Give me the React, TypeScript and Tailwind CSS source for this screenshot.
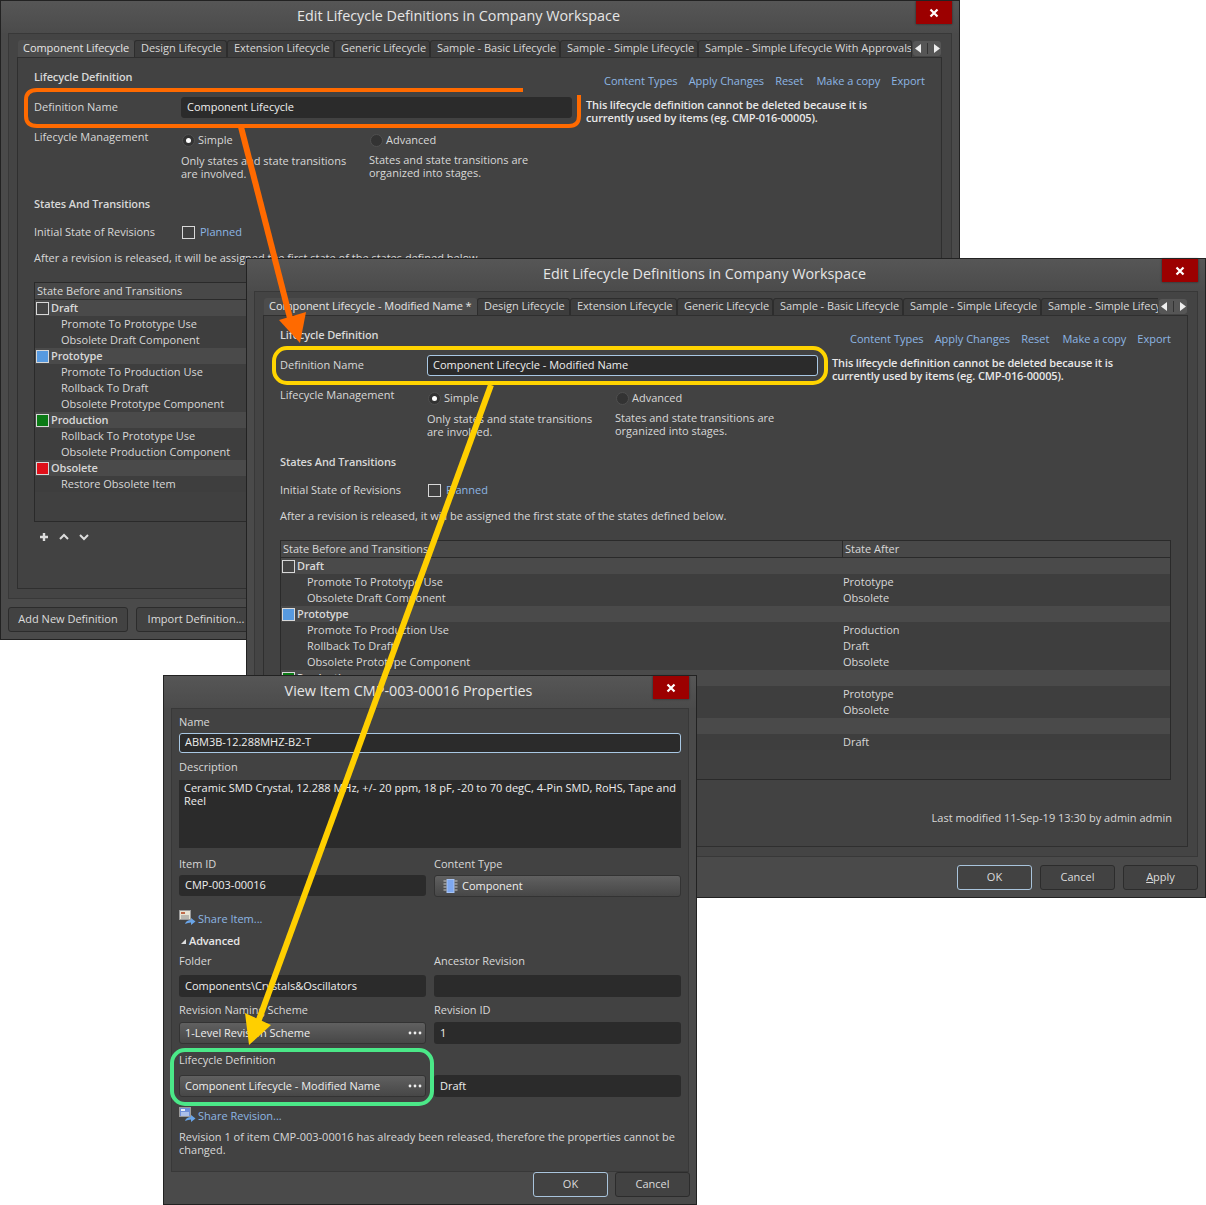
import React from "react";

const Swatch = ({ color }: { color: string }) => (
  <span className={`w-[13px] h-[13px] border border-[#d8d8d8] shrink-0 ${color}`} />
);

const Close = () => (
  <div className="w-[36px] h-[23px] mr-[7px] bg-[#9c0000] flex items-center justify-center shrink-0 shadow-[0_0_2px_#222]">
    <svg width="10" height="10" viewBox="0 0 10 10">
      <path d="M1.5 1.5 L8.5 8.5 M8.5 1.5 L1.5 8.5" stroke="#fff" strokeWidth="2.2" />
    </svg>
  </div>
);

const TitleBar = ({ title }: { title: string }) => (
  <div className="h-8 flex items-start shrink-0 bg-gradient-to-b from-[#565656] to-[#4b4b4b]">
    <div className="flex-1 h-[30px] flex items-center justify-center text-[14.35px] text-[#e6e6e6]">{title}</div>
    <Close />
  </div>
);

const Btn = ({ label, primary, w }: { label: React.ReactNode; primary?: boolean; w: string }) => (
  <div
    className={`h-[25px] ${w} rounded-[3px] bg-[#424242] border flex items-center justify-center pb-px text-[#dcdcdc] ${
      primary ? "border-[#a9c4dc]" : "border-[#2c2c2c]"
    }`}
  >
    {label}
  </div>
);

const Radio = ({ on, label }: { on?: boolean; label: string }) => (
  <div className="flex items-center h-[14px] mt-[3px]">
    <span className="w-[13px] h-[13px] rounded-full bg-[#333333] border border-[#4f4f4f] flex items-center justify-center">
      {on && <span className="w-[5px] h-[5px] rounded-full bg-white" />}
    </span>
    <span className="ml-[3px]">{label}</span>
  </div>
);

type Row = { name: string; after?: string; color?: string };
const rows: Row[] = [
  { name: "Draft", color: "bg-[#444444]" },
  { name: "Promote To Prototype Use", after: "Prototype" },
  { name: "Obsolete Draft Component", after: "Obsolete" },
  { name: "Prototype", color: "bg-[#579ae0]" },
  { name: "Promote To Production Use", after: "Production" },
  { name: "Rollback To Draft", after: "Draft" },
  { name: "Obsolete Prototype Component", after: "Obsolete" },
  { name: "Production", color: "bg-[#0b7a16]" },
  { name: "Rollback To Prototype Use", after: "Prototype" },
  { name: "Obsolete Production Component", after: "Obsolete" },
  { name: "Obsolete", color: "bg-[#e0101a]" },
  { name: "Restore Obsolete Item", after: "Draft" },
];

const StateTable = () => (
  <div className="mt-[17px] w-[891px] h-[240px] border border-[#2a2a2a] bg-[#404040] flex flex-col">
    <div className="h-[17px] shrink-0 flex items-center bg-[#484848] border-b border-[#2a2a2a]">
      <div className="w-[561px] pl-[2px]">State Before and Transitions</div>
      <div className="border-l border-[#2a2a2a] pl-[2px] h-[16px] leading-[16px]">State After</div>
    </div>
    {rows.map((r) => (
      <div
        key={r.name}
        className={`h-4 shrink-0 flex items-center ${r.color ? "bg-[#4a4a4a]" : "bg-[#3e3e3e]"}`}
      >
        <div className={`w-[562px] flex items-center ${r.color ? "pl-[1px]" : "pl-[26px]"}`}>
          {r.color && <Swatch color={r.color} />}
          <span className={r.color ? "font-semibold tracking-[-0.13px] ml-[2px]" : ""}>{r.name}</span>
        </div>
        <div>{r.after}</div>
      </div>
    ))}
  </div>
);

const TreeTools = () => (
  <div className="h-[14px] mt-[8px] flex items-center pl-[4px] gap-[8px]">
    <svg width="12" height="12" viewBox="0 0 12 12">
      <path d="M6 2 V10 M2 6 H10" stroke="#dddddd" strokeWidth="2.4" />
    </svg>
    <svg width="12" height="12" viewBox="0 0 12 12">
      <path d="M2 8 L6 4 L10 8" stroke="#dddddd" strokeWidth="2" fill="none" />
    </svg>
    <svg width="12" height="12" viewBox="0 0 12 12">
      <path d="M2 4 L6 8 L10 4" stroke="#dddddd" strokeWidth="2" fill="none" />
    </svg>
  </div>
);

const tabWidths = ["w-[93px]", "w-[107px]", "w-[96px]", "w-[130px]", "w-[138px]", "w-[214px]"];
const tabNames = [
  "Design Lifecycle",
  "Extension Lifecycle",
  "Generic Lifecycle",
  "Sample - Basic Lifecycle",
  "Sample - Simple Lifecycle",
  "Sample - Simple Lifecycle With Approvals",
];

const LifecycleWindow = ({
  pos,
  firstTab,
  firstTabW,
  value,
  focused,
}: {
  pos: string;
  firstTab: string;
  firstTabW: string;
  value: string;
  focused?: boolean;
}) => (
  <div className={`absolute ${pos} w-[960px] h-[640px] bg-[#4a4a4a] border border-[#222222] flex flex-col`}>
    <TitleBar title="Edit Lifecycle Definitions in Company Workspace" />
    <div className="ml-[7px] w-[944px] h-[566px] border border-[#383838] bg-[#444444] pt-[6px] pl-2 shrink-0">
      <div className="flex h-[17px] w-[925px] items-stretch">
        <div className="flex w-[895px] overflow-hidden tracking-[-0.04px]">
          <div className={`${firstTabW} shrink-0 bg-[#4c4c4c] rounded-t-[3px] pl-[5px] leading-[15px] whitespace-nowrap ml-[1px] text-[#e6e6e6]`}>
            {firstTab}
          </div>
          {tabNames.map((t, i) => (
            <div
              key={t}
              className={`${tabWidths[i]} shrink-0 bg-[#3d3d3d] border-t border-x border-[#2d2d2d] rounded-t-[3px] pl-[6px] leading-[13px] whitespace-nowrap overflow-hidden`}
            >
              {t}
            </div>
          ))}
        </div>
        <div className="ml-[1px] w-[28px] h-[15px] mt-[1px] rounded-[3px] bg-[#565656] flex items-center justify-center gap-[5px]">
          <svg width="7" height="9" viewBox="0 0 7 9"><path d="M6 0 V9 L0 4.5 Z" fill="#eeeeee" /></svg>
          <span className="w-px h-[11px] bg-[#333333]" />
          <svg width="7" height="9" viewBox="0 0 7 9"><path d="M1 0 V9 L7 4.5 Z" fill="#eeeeee" /></svg>
        </div>
      </div>
      <div className="w-[925px] h-[532px] border border-[#2f2f2f] bg-[#424242] pl-4">
        <div className="flex justify-between h-[32px] pr-4">
          <div className="mt-[12px] font-semibold tracking-[-0.13px]">Lifecycle Definition</div>
          <div className="mt-[16px] flex text-[#8db6e4] gap-[11px]">
            <span>Content Types</span>
            <span>Apply Changes</span>
            <span className="mr-[2px]">Reset</span>
            <span>Make a copy</span>
            <span>Export</span>
          </div>
        </div>
        <div className="flex h-[21px] mt-[7px] items-center">
          <div className="w-[147px] pb-[2px]">Definition Name</div>
          <div
            className={`w-[391px] h-[21px] rounded-[3px] bg-[#2b2b2b] pl-[5px] pb-[2px] flex items-center text-[#eeeeee] border ${
              focused ? "border-[#a9c8e4]" : "border-[#2b2b2b]"
            }`}
          >
            {value}
          </div>
          <div className="ml-[14px] w-[300px] font-semibold tracking-[-0.13px] leading-[13px] h-[21px] pt-[1px] text-[#e8e8e8]">
            This lifecycle definition cannot be deleted because it is currently used by items (eg. CMP-016-00005).
          </div>
        </div>
        <div className="flex mt-3">
          <div className="w-[147px]">Lifecycle Management</div>
          <div className="w-[188px]">
            <div className="pl-px"><Radio on label="Simple" /></div>
            <div className="mt-[7px] leading-[13px] w-[172px]">Only states and state transitions are involved.</div>
          </div>
          <div>
            <div className="pl-px"><Radio label="Advanced" /></div>
            <div className="mt-[6px] leading-[13px] w-[172px]">States and state transitions are organized into stages.</div>
          </div>
        </div>
        <div className="mt-[17px] font-semibold tracking-[-0.13px]">States And Transitions</div>
        <div className="flex items-center mt-[14px]">
          <div className="w-[148px]">Initial State of Revisions</div>
          <span className="w-[13px] h-[13px] border border-[#d8d8d8] bg-[#404040]" />
          <span className="ml-[5px] text-[#8db6e4]">Planned</span>
        </div>
        <div className="mt-3">After a revision is released, it will be assigned the first state of the states defined below.</div>
        <StateTable />
        <TreeTools />
        <div className="mt-[9px] pr-[15px] text-right">Last modified 11-Sep-19 13:30 by admin admin</div>
      </div>
    </div>
    <div className="flex justify-between mt-2 pl-[7px] pr-[7px]">
      <div className="flex gap-2">
        <Btn w="w-[120px]" label="Add New Definition" />
        <Btn w="w-[120px]" label="Import Definition..." />
      </div>
      <div className="flex gap-2">
        <Btn w="w-[75px]" primary label="OK" />
        <Btn w="w-[75px]" label="Cancel" />
        <Btn w="w-[75px]" label={<span><u>A</u>pply</span>} />
      </div>
    </div>
  </div>
);

const Field = ({ h, children }: { h: string; children?: React.ReactNode }) => (
  <div className={`${h} rounded-[3px] bg-[#2b2b2b] pl-[6px] pb-px flex items-center text-[#eeeeee]`}>{children}</div>
);

const Dropdown = ({ children, dots }: { children: React.ReactNode; dots?: boolean }) => (
  <div className="h-[22px] rounded-[3px] bg-gradient-to-b from-[#606060] to-[#474747] border border-[#333333] pl-[5px] pr-[2px] flex items-center justify-between text-[#eeeeee]">
    <div className="flex items-center">{children}</div>
    {dots && (
      <svg width="16" height="4" viewBox="0 0 16 4">
        <circle cx="3" cy="2" r="1.4" fill="#eeeeee" />
        <circle cx="8" cy="2" r="1.4" fill="#eeeeee" />
        <circle cx="13" cy="2" r="1.4" fill="#eeeeee" />
      </svg>
    )}
  </div>
);

const ShareIcon = ({ blue }: { blue?: boolean }) => (
  <svg width="17" height="16" viewBox="0 0 17 16" className="shrink-0">
    <rect x="0.5" y="0.5" width="11" height="9" fill={blue ? "#6f8fd8" : "#e8e4d4"} stroke="#9a9a9a" />
    <rect x="2" y="2" width="4" height="2" fill={blue ? "#e8eef8" : "#c06a4a"} />
    <path d="M2 6 H10 M2 8 H10" stroke={blue ? "#e8eef8" : "#8a8a8a"} />
    <path d="M6 14 C7 11 9 10 12 10 V8 L16.5 11.5 L12 15 V12.5 C10 12.5 8 13 6 14 Z" fill="#6aa5e8" />
  </svg>
);

const ComponentIcon = () => (
  <svg width="15" height="14" viewBox="0 0 15 14" className="shrink-0">
    <rect x="4" y="0.5" width="7" height="13" fill="#7ea8f0" stroke="#a8c4f4" />
    <path d="M0.5 2 H3.5 M0.5 5 H3.5 M0.5 8 H3.5 M0.5 11 H3.5 M11.5 2 H14.5 M11.5 5 H14.5 M11.5 8 H14.5 M11.5 11 H14.5" stroke="#c8c8c8" />
  </svg>
);

const ItemWindow = () => (
  <div className="absolute left-[163px] top-[675px] w-[534px] h-[530px] bg-[#4a4a4a] border border-[#222222] flex flex-col">
    <TitleBar title="View Item CMP-003-00016 Properties" />
    <div className="ml-[7px] w-[518px] h-[464px] shrink-0 border border-[#383838] bg-[#424242] pl-[7px] pt-[6px]">
      <div className="w-[502px]">
        <div>Name</div>
        <div className="mt-[4px] h-[20px] rounded-[3px] bg-[#2b2b2b] border border-[#a9c8e4] pl-[5px] pb-[2px] flex items-center text-[#eeeeee]">ABM3B-12.288MHZ-B2-T</div>
        <div className="mt-[7px]">Description</div>
        <div className="mt-[6px] h-[68px] bg-[#2b2b2b] px-[5px] pt-[1px] leading-[13px] text-[#eeeeee]">
          Ceramic SMD Crystal, 12.288 MHz, +/- 20 ppm, 18 pF, -20 to 70 degC, 4-Pin SMD, RoHS, Tape and Reel
        </div>
        <div className="mt-[9px] grid grid-cols-[247px_247px] gap-x-2">
          <div>Item ID</div>
          <div>Content Type</div>
          <div className="mt-[4px]"><Field h="h-[21px]">CMP-003-00016</Field></div>
          <div className="mt-[4px]">
            <Dropdown>
              <span className="ml-[3px]"><ComponentIcon /></span>
              <span className="ml-[4px]">Component</span>
            </Dropdown>
          </div>
        </div>
        <div className="mt-[13px] h-4 flex items-end text-[#8db6e4]">
          <ShareIcon />
          <span className="ml-[2px] leading-[14px]">Share Item...</span>
        </div>
        <div className="mt-[8px] flex items-center font-semibold tracking-[-0.13px] text-[#e6e6e6]">
          <svg width="7" height="7" viewBox="0 0 7 7" className="ml-px"><path d="M6 1 V6 H1 Z" fill="#dddddd" /></svg>
          <span className="ml-[2px]">Advanced</span>
        </div>
        <div className="mt-[6px] grid grid-cols-[247px_247px] gap-x-2">
          <div>Folder</div>
          <div>Ancestor Revision</div>
          <div className="mt-[7px]"><Field h="h-[22px]">Components\Crystals&amp;Oscillators</Field></div>
          <div className="mt-[7px]"><Field h="h-[22px]" /></div>
          <div className="mt-[6px]">Revision Naming Scheme</div>
          <div className="mt-[6px]">Revision ID</div>
          <div className="mt-[5px]"><Dropdown dots>1-Level Revision Scheme</Dropdown></div>
          <div className="mt-[5px]"><Field h="h-[22px]">1</Field></div>
          <div className="mt-[9px]">Lifecycle Definition</div>
          <div className="mt-[9px]" />
          <div className="mt-[8px]"><Dropdown dots>Component Lifecycle - Modified Name</Dropdown></div>
          <div className="mt-[8px]"><Field h="h-[22px]">Draft</Field></div>
        </div>
        <div className="mt-[10px] h-4 flex items-end text-[#8db6e4]">
          <ShareIcon blue />
          <span className="ml-[2px] leading-[14px]">Share Revision...</span>
        </div>
        <div className="mt-[7px] leading-[13px]">
          Revision 1 of item CMP-003-00016 has already been released, therefore the properties cannot be changed.
        </div>
      </div>
    </div>
    <div className="flex justify-end gap-[7px] pr-[6px]">
      <Btn w="w-[75px]" primary label="OK" />
      <Btn w="w-[75px]" label="Cancel" />
    </div>
  </div>
);

const Annotations = () => (
  <svg className="absolute left-0 top-0 pointer-events-none" width="1206" height="1205" viewBox="0 0 1206 1205" fill="none">
    <path d="M523 90 H37 Q26 90 26 100 V116 Q26 126 37 126 H569 Q579 126 579 116 V95" stroke="#ff6a00" strokeWidth="4" />
    <line x1="241" y1="127" x2="291" y2="322" stroke="#ff6a00" strokeWidth="6" />
    <polygon points="279,320 306,312 300,343" fill="#ff6a00" />
    <rect x="274" y="348" width="552" height="35" rx="13" stroke="#ffd400" strokeWidth="4" />
    <line x1="491" y1="385" x2="257" y2="1025" stroke="#ffcf00" strokeWidth="6" />
    <polygon points="245,1013 271,1025 249,1045" fill="#ffcf00" />
    <rect x="172" y="1050" width="260" height="54" rx="13" stroke="#4be888" strokeWidth="4" />
  </svg>
);

export default function App() {
  return (
    <div className="relative w-[1206px] h-[1205px] bg-white overflow-hidden font-['Open_Sans',sans-serif] text-[11px] leading-[14px] text-[#d8d8d8]">
      <LifecycleWindow pos="left-0 top-0" firstTab="Component Lifecycle" firstTabW="w-[116px]" value="Component Lifecycle" />
      <LifecycleWindow pos="left-[246px] top-[258px]" firstTab="Component Lifecycle - Modified Name *" firstTabW="w-[213px]" value="Component Lifecycle - Modified Name" focused />
      <ItemWindow />
      <Annotations />
    </div>
  );
}
